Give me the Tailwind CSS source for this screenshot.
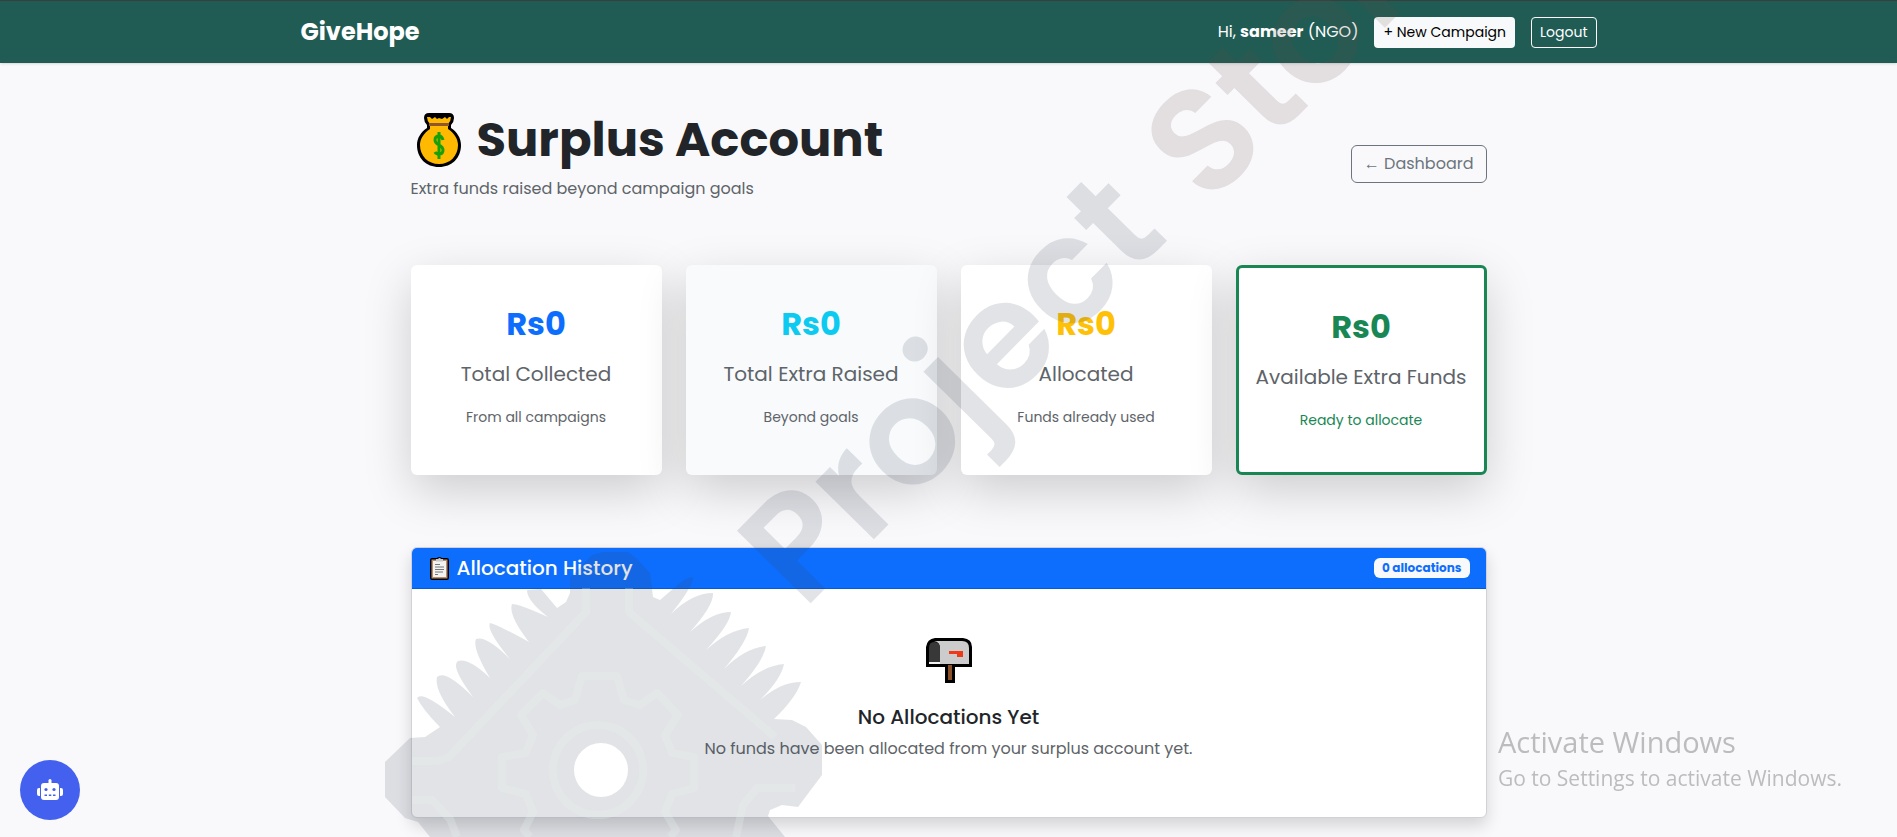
<!DOCTYPE html>
<html lang="en">
<head>
<meta charset="utf-8">
<meta name="viewport" content="width=device-width, initial-scale=1">
<title>GiveHope - Surplus Account</title>
<script src="https://cdn.jsdelivr.net/npm/@tailwindcss/browser@4"></script>
</head>
<body class="relative min-h-screen overflow-x-hidden bg-[#f9f9fb] font-[Poppins,'Liberation_Sans',sans-serif] text-base text-[#212529]">

<nav class="border-t border-[#3a3f3d] bg-[#205c53] shadow-sm">
  <div class="mx-auto flex h-[62px] max-w-[1320px] items-center justify-between px-3">
    <a href="#" class="text-2xl font-bold text-white">GiveHope</a>
    <div class="flex items-center gap-4 text-white">
      <span>Hi, <strong class="font-bold">sameer</strong> (NGO)</span>
      <button type="button" class="h-[31px] rounded bg-[#f8f9fa] px-[9px] text-sm text-black">+ New Campaign</button>
      <button type="button" class="h-[31px] rounded border border-white px-2 text-sm text-white">Logout</button>
    </div>
  </div>
</nav>

<main class="mx-auto max-w-[1100px] px-3 pt-12 pb-4">
  <header class="mb-12 flex items-center justify-between">
    <div class="pb-4">
      <h1 class="mb-2 flex items-center gap-4 text-5xl leading-[58px] font-bold">
        <svg class="ml-1.5 h-[54px] w-[44px]" viewBox="0 0 44 54" aria-hidden="true">
          <path d="M7 5Q7 0 12 0H32Q37 0 37 5Q37 9 34 12V15C40 19 44 25 44 32C44 45 35 54 22 54S0 45 0 32C0 25 4 19 10 15V12Q7 9 7 5Z" fill="#000"/>
          <path d="M10 4L13 4L15 6L18 4L20 6L22 5L25 6L28 4L30 6L32 4H34Q34 8 31 11V16C37 20 41 26 41 32C41 43 33 51 22 51S3 43 3 32C3 26 7 20 13 16V11Q10 8 10 4Z" fill="#ffb900"/>
          <path d="M12 10H32V13H12Z" fill="#8f562e"/>
          <path d="M26 27Q25 23 22 23Q18 23 18 27Q18 30 22 32Q26 34 26 37Q26 41 22 41Q19 41 18 39M22 19V46" fill="none" stroke="#16a10b" stroke-width="3"/>
        </svg>
        Surplus Account
      </h1>
      <p class="leading-6 text-[#5e6469]">Extra funds raised beyond campaign goals</p>
    </div>
    <a href="#" class="flex h-[38px] items-center rounded-md border border-[#6c757d] px-3 text-[#6c757d]">← Dashboard</a>
  </header>

  <section class="mb-[72px] grid grid-cols-2 gap-6 text-center lg:grid-cols-4">
    <div class="h-[210px] rounded-md bg-white pt-10 shadow-[0_16px_48px_rgba(0,0,0,0.175)]">
      <h2 class="mb-4 text-[32px] leading-[38px] font-bold text-[#0d6efd]">Rs0</h2>
      <p class="mb-[18px] text-xl leading-[30px] text-[#5e6469]">Total Collected</p>
      <p class="text-sm leading-[21px] text-[#5e6469]">From all campaigns</p>
    </div>
    <div class="h-[210px] rounded-md bg-[#f8fafc] pt-10 shadow-[0_16px_48px_rgba(0,0,0,0.175)]">
      <h2 class="mb-4 text-[32px] leading-[38px] font-bold text-[#0dcaf0]">Rs0</h2>
      <p class="mb-[18px] text-xl leading-[30px] text-[#5e6469]">Total Extra Raised</p>
      <p class="text-sm leading-[21px] text-[#5e6469]">Beyond goals</p>
    </div>
    <div class="h-[210px] rounded-md bg-white pt-10 shadow-[0_16px_48px_rgba(0,0,0,0.175)]">
      <h2 class="mb-4 text-[32px] leading-[38px] font-bold text-[#ffc107]">Rs0</h2>
      <p class="mb-[18px] text-xl leading-[30px] text-[#5e6469]">Allocated</p>
      <p class="text-sm leading-[21px] text-[#5e6469]">Funds already used</p>
    </div>
    <div class="h-[210px] rounded-md border-3 border-[#198754] bg-white pt-10 shadow-[0_16px_48px_rgba(0,0,0,0.175)]">
      <h2 class="mb-4 text-[32px] leading-[38px] font-bold text-[#198754]">Rs0</h2>
      <p class="mb-[18px] text-xl leading-[30px] text-[#5e6469]">Available Extra Funds</p>
      <p class="text-sm leading-[21px] text-[#198754]">Ready to allocate</p>
    </div>
  </section>

  <section class="overflow-hidden rounded-md border border-[#d0d2d6] bg-white shadow-[0_8px_16px_rgba(0,0,0,0.15)]">
    <div class="flex h-[41px] items-center justify-between border-b border-[#0b5bd0] bg-[#0d6efd] px-4">
      <h3 class="flex items-center gap-2 text-xl font-medium text-white">
        <svg class="ml-0.5 h-[23px] w-[19px]" viewBox="0 0 19 23" aria-hidden="true">
          <path d="M2 1H7Q9-1 12 1H17Q19 1 19 3V21Q19 23 17 23H2Q0 23 0 21V3Q0 1 2 1Z" fill="#000"/>
          <rect x="1.5" y="2.5" width="16" height="19" fill="#b98b68"/>
          <rect x="3" y="4" width="13" height="16" fill="#f2f2f2"/>
          <path d="M6 2H8Q9.500 0 11 2H13V4.500H6Z" fill="#c8c8c8"/>
          <path d="M5 7.500H10M5 10H14M5 12.500H14M5 15H13M5 17.500H8" stroke="#777" stroke-width="1"/>
        </svg>
        Allocation History
      </h3>
      <span class="rounded-md bg-[#f8f9fa] px-2 py-1 text-xs leading-3 font-bold text-[#0d6efd]">0 allocations</span>
    </div>
    <div class="flex flex-col items-center pt-[49px] pb-14 text-center">
      <svg class="mb-[22px] h-[45px] w-[46px]" viewBox="0 0 46 45" aria-hidden="true">
        <path d="M9 0H37Q46 1 46 9V29H29V45H19V29H0V9Q1 1 9 0Z" fill="#000"/>
        <path d="M8 3H36Q43 3 43 10V26H14V10Q14 4 8 3Z" fill="#ccc"/>
        <path d="M3 10Q3 4 8 4Q14 4 14 10V24H3Z" fill="#383838"/>
        <path d="M3 24H14V26H3Z" fill="#f2f2f2"/>
        <path d="M23 13H37V19H31V16H23Z" fill="#f03a17"/>
        <path d="M22 27H26V42H22Z" fill="#8a5128"/>
      </svg>
      <h4 class="mb-2 text-xl leading-6 font-medium">No Allocations Yet</h4>
      <p class="leading-6 text-[#5e6469]">No funds have been allocated from your surplus account yet.</p>
    </div>
  </section>
</main>

<!-- Watermark: gear emblem and diagonal wordmark -->
<svg class="pointer-events-none absolute inset-0 h-full w-full" viewBox="0 0 1897 837" preserveAspectRatio="xMidYMid slice" aria-hidden="true">
  <path fill="#374458" fill-opacity="0.15" fill-rule="evenodd" d="M592 555L603 552H628L636 558L650 573L653 597L660 600L674 588Q686 577 693 577Q694 585 671 614Q692 593 713 593Q714 605 690 632Q712 612 731 612Q730 624 706 650Q728 630 749 628Q747 642 724 669Q745 648 766 646Q764 660 741 686Q762 666 784 664Q781 680 757 703Q779 682 801 682Q796 698 774 719L792 720L806 727L822 745V775L798 807L782 805L770 810L768 816L785 837H430L418 822L405 818L385 797V762L410 738L425 737L440 727Q423 710 417 698Q422 690 455 717Q434 690 437 677Q445 669 473 697Q450 666 458 661Q469 658 490 678Q472 648 476 639Q486 635 510 659Q486 630 490 623Q498 625 529 642Q508 615 512 604Q519 604 548 617Q527 601 527 590L541 589L557 608L566 602L570 593V578ZM601 743A27 27 0 1 0 601 797A27 27 0 1 0 601 743Z"/>
  <g fill="none" stroke="#eef3ee" stroke-opacity="0.25" stroke-width="8" stroke-linejoin="round">
    <path d="M586 588V612L449 757L438 761H412M629 588V612L775 737M412 800H432L450 819L457 837M795 788H757L743 805L736 837"/>
    <path d="M530 837L524 830L533 812L526 794L502 788V757L526 753L533 735L521 715L543 693L560 705L575 700L582 676H617L624 700L640 705L657 693L678 715L665 735L672 753L694 757V788L672 794L665 812L676 830L670 837"/>
    <circle cx="598" cy="770" r="45"/>
  </g>
  <g transform="translate(812 602) rotate(-45.500)" font-family="Poppins, sans-serif" font-size="148" font-weight="600">
    <text x="-12" y="0" fill="#374458" fill-opacity="0.15">Project</text>
    <text x="559" y="6" fill="#644b4b" fill-opacity="0.15">Stor</text>
  </g>
</svg>

<div class="pointer-events-none fixed right-[55px] bottom-[43px] font-['Open_Sans',sans-serif] text-[#bcbcbe]">
  <p class="text-[29px] leading-10">Activate Windows</p>
  <p class="text-[21px] leading-8">Go to Settings to activate Windows.</p>
</div>

<button type="button" aria-label="Open chat assistant" class="fixed bottom-[17px] left-5 flex size-[60px] items-center justify-center rounded-full bg-[#4361ee]">
  <svg class="h-[22px] w-[26px]" viewBox="0 0 26 22" aria-hidden="true">
    <g fill="#fff"><rect x="11.500" y="0" width="3" height="6" rx="1.500"/><rect x="4" y="4" width="18" height="17" rx="3"/><path d="M3 9V17H2Q0 17 0 15V11Q0 9 2 9ZM23 9H24Q26 9 26 11V15Q26 17 24 17H23Z"/></g>
    <g fill="#4361ee"><circle cx="9" cy="10.500" r="1.600"/><circle cx="17" cy="10.500" r="1.600"/><path d="M7.500 15.500H10V17H7.500ZM11.800 15.500H14.300V17H11.800ZM16 15.500H18.500V17H16Z"/></g>
  </svg>
</button>
</body>
</html>
